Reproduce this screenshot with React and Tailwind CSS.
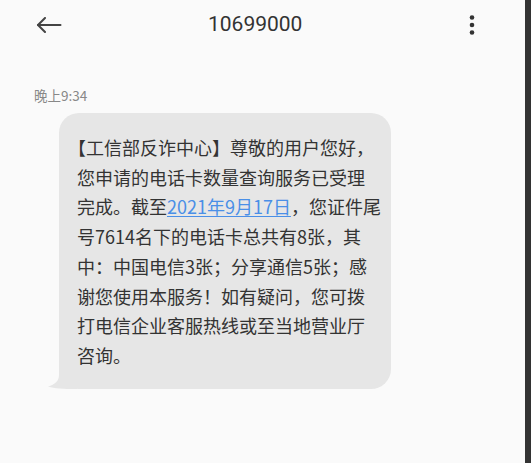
import React from 'react'

const lines = [
  null,
  '您申请的电话卡数量查询服务已受理',
  'link',
  '号7614名下的电话卡总共有8张，其',
  '中：中国电信3张；分享通信5张；感',
  '谢您使用本服务！如有疑问，您可拨',
  '打电信企业客服热线或至当地营业厅',
  '咨询。',
]

function BackArrow() {
  return (
    <svg width="26" height="16" viewBox="0 0 26 16" fill="none" stroke="#444" strokeWidth="2" strokeLinecap="round" strokeLinejoin="round">
      <path d="M24.5 8H2" />
      <path d="M9 1L2 8l7 7" />
    </svg>
  )
}

function MoreDots() {
  return (
    <svg width="6" height="20" viewBox="0 0 6 20" fill="#333">
      <circle cx="3" cy="2.5" r="2.3" />
      <circle cx="3" cy="10" r="2.3" />
      <circle cx="3" cy="17.5" r="2.3" />
    </svg>
  )
}

function Line({ kind }) {
  if (kind === null) {
    return (
      <div className="whitespace-nowrap">
        <span className="[font-feature-settings:'halt']">【</span>工信部反诈中心】尊敬的用户您好，
      </div>
    )
  }
  if (kind === 'link') {
    return (
      <div className="whitespace-nowrap">
        完成。截至<span className="text-[#4a8fe7] underline underline-offset-2">2021年9月17日</span>，您证件尾
      </div>
    )
  }
  return <div className="whitespace-nowrap">{kind}</div>
}

export default function App() {
  return (
    <div className="flex h-[463px] w-full overflow-hidden" style={{ fontFamily: '"Noto Sans CJK SC", "Noto Sans", sans-serif' }}>
      <div className="flex flex-1 flex-col bg-[#fafafa]">
        {/* top bar */}
        <header className="flex h-[50px] items-center">
          <div className="ml-[36px]">
            <BackArrow />
          </div>
          <div className="ml-[146px] font-['Roboto',sans-serif] text-[21px] text-[#333]">10699000</div>
          <div className="ml-auto mr-[50px]">
            <MoreDots />
          </div>
        </header>

        <div className="mt-[37px] pl-[34px] text-[13.5px] leading-[17px] text-[#888]">晚上9:34</div>

        {/* message bubble */}
        <div className="relative ml-[59px] mt-[9px] w-[332px] rounded-[20px] bg-[#e6e6e6] pl-[18px] pr-[10px] pt-[20px] pb-[18px] text-[18px] leading-[29.7px] text-[#333]">
          {lines.map((line, i) => (
            <Line key={i} kind={line} />
          ))}
          <svg className="absolute bottom-0 left-[-12px]" width="30" height="22" viewBox="0 0 30 22" fill="#e6e6e6">
            <path d="M12 0 L12 8 C12 14 8 17.5 1 19.5 C8 21.5 15 22 30 22 L30 0 Z" />
          </svg>
        </div>
      </div>
      <div className="w-[6px] bg-[#333]" />
    </div>
  )
}
